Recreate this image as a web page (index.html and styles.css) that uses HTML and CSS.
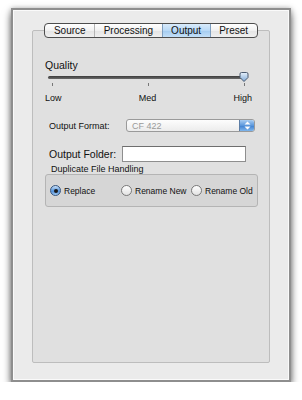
FILE: index.html
```html
<!DOCTYPE html>
<html lang="en">
<head>
  <meta charset="UTF-8">
  <title>Output Settings</title>
  <link rel="stylesheet" href="styles.css">
</head>
<body>

<div class="window">
  <div class="tabs">
    <div class="tab">Source</div>
    <div class="tab">Processing</div>
    <div class="tab selected">Output</div>
    <div class="tab">Preset</div>
  </div>

  <div class="tab-box">
    <div class="quality">Quality</div>
    <div class="slider">
      <div class="track"></div>
      <svg class="knob" width="10" height="11" viewBox="0 0 10 11">
        <defs>
          <linearGradient id="kg" x1="0" y1="0" x2="0" y2="1">
            <stop offset="0" stop-color="#e8f2fc"/>
            <stop offset="1" stop-color="#7fa9d6"/>
          </linearGradient>
        </defs>
        <path d="M1 2 Q1 0.5 2.5 0.5 H7.5 Q9 0.5 9 2 V5.5 L5 9.5 L1 5.5 Z" fill="url(#kg)" stroke="#4a5a70" stroke-width="1"/>
      </svg>
    </div>
    <div class="ticks">
      <span></span><span></span><span></span>
    </div>
    <div class="tick-labels">
      <span>Low</span><span>Med</span><span>High</span>
    </div>

    <div class="row format-row">
      <label class="small-label">Output Format:</label>
      <div class="popup">
        <span>CF 422</span>
        <div class="stepper">
          <svg width="7" height="9" viewBox="0 0 7 9">
            <path d="M3.5 0.5 L6.5 3.5 H0.5 Z M3.5 8.5 L6.5 5.5 H0.5 Z" fill="#fff"/>
          </svg>
        </div>
      </div>
    </div>

    <div class="row folder-row">
      <label class="big-label">Output Folder:</label>
      <div class="text-field"></div>
    </div>

    <div class="group-title">Duplicate File Handling</div>
    <div class="group">
      <div class="radio-item"><span class="radio on"></span>Replace</div>
      <div class="radio-item"><span class="radio"></span>Rename New</div>
      <div class="radio-item"><span class="radio"></span>Rename Old</div>
    </div>
  </div>
</div>

</body>
</html>
```

FILE: styles.css
```css
body {
  margin: 0;
  padding: 0;
  background-color: #ffffff;
  font-family: "Liberation Sans", Arial, sans-serif;
  color: #111;
}
.window {
  margin: 8px 0 0 11px;
  width: 280px;
  height: 374px;
  box-sizing: border-box;
  padding: 13px 19px 17px 19px;
  background-color: #ebebeb;
  border: 2px solid #8e8e8e;
  box-shadow: inset 0 0 0 1px #fafafa, 0 5px 8px rgba(0, 0, 0, 0.55), 0 0 5px rgba(0, 0, 0, 0.25);
  display: flex;
  flex-direction: column;
}
.tabs {
  display: flex;
  align-self: center;
  height: 13px;
  border: 1px solid #4d4d4d;
  border-radius: 4px;
  background: linear-gradient(#ffffff, #f1f1f1 50%, #e4e4e4 51%, #f0f0f0);
  margin-bottom: -8px;
  position: relative;
  z-index: 1;
  overflow: hidden;
}
.tab {
  font-size: 10px;
  line-height: 13px;
  padding: 0 8.5px;
  border-left: 1px solid #b4b4b4;
}
.tab:first-child {
  border-left: none;
}
.tab.selected {
  background: linear-gradient(#d9ebfb, #b9d9f6 50%, #a3cbf0 51%, #c4e0f8);
  border-left-color: #7f9fc0;
  border-right: 1px solid #7f9fc0;
}
.tab.selected + .tab {
  border-left: none;
}
.tab-box {
  flex-grow: 1;
  background-color: #e0e0e0;
  border: 1px solid #bdbdbd;
  border-radius: 2px;
  padding: 28px 11px 0 12px;
}
.quality {
  font-size: 10.5px;
  line-height: 13px;
}
.slider {
  position: relative;
  height: 10px;
  margin: 0 13px 0 3px;
}
.track {
  position: absolute;
  left: 0;
  right: 0;
  top: 4px;
  height: 3px;
  border-radius: 2px;
  background: linear-gradient(#3c3c3c, #6a6a6a);
}
.knob {
  position: absolute;
  right: -4px;
  top: 0;
}
.ticks {
  display: flex;
  justify-content: space-between;
  margin: 1px 13px 0 7px;
  height: 3px;
}
.ticks span {
  width: 1px;
  background-color: #777;
}
.tick-labels {
  display: flex;
  justify-content: space-between;
  font-size: 9px;
  line-height: 11px;
  margin-top: 7px;
  padding-right: 6px;
}
.row {
  display: flex;
  align-items: center;
}
.format-row {
  margin-top: 15px;
  padding-left: 4px;
}
.small-label {
  font-size: 9px;
  width: 77px;
}
.popup {
  width: 122px;
  height: 11px;
  border: 1px solid #9a9a9a;
  border-radius: 3px;
  background: linear-gradient(#fdfdfd, #ececec);
  display: flex;
  align-items: center;
  justify-content: space-between;
  font-size: 9px;
  color: #9a9a9a;
  padding-left: 5px;
  box-sizing: content-box;
  overflow: hidden;
}
.stepper {
  width: 14px;
  height: 11px;
  background: linear-gradient(#a9cdf2, #5a97dc 50%, #3d7fd0 51%, #7fb6ec);
  border-left: 1px solid #5d7ea6;
  display: flex;
  align-items: center;
  justify-content: center;
}
.folder-row {
  margin-top: 14px;
  padding-left: 4px;
}
.big-label {
  font-size: 10.5px;
  width: 73px;
}
.text-field {
  width: 122px;
  height: 14px;
  background-color: #ffffff;
  border: 1px solid #8e8e8e;
  border-top-color: #6e6e6e;
}
.group-title {
  font-size: 9px;
  line-height: 10px;
  margin-top: 2px;
  padding-left: 6px;
}
.group {
  display: grid;
  grid-template-columns: 71px 70px auto;
  align-items: center;
  height: 31px;
  background-color: #d6d6d6;
  border: 1px solid #b4b4b4;
  border-radius: 3px;
  padding-left: 4px;
}
.radio-item {
  display: flex;
  align-items: center;
  gap: 3px;
  font-size: 8.5px;
}
.radio {
  width: 9px;
  height: 9px;
  border-radius: 50%;
  border: 1px solid #7a7a7a;
  background: linear-gradient(#ffffff, #e2e2e2);
  position: relative;
}
.radio.on {
  border-color: #35557e;
  background: linear-gradient(#c9e0f8, #5f9ce0 50%, #4a88d6 51%, #9cc8f2);
}
.radio.on::after {
  content: "";
  position: absolute;
  left: 2.5px;
  top: 2.5px;
  width: 4px;
  height: 4px;
  border-radius: 50%;
  background-color: #1a1a1a;
}
```
